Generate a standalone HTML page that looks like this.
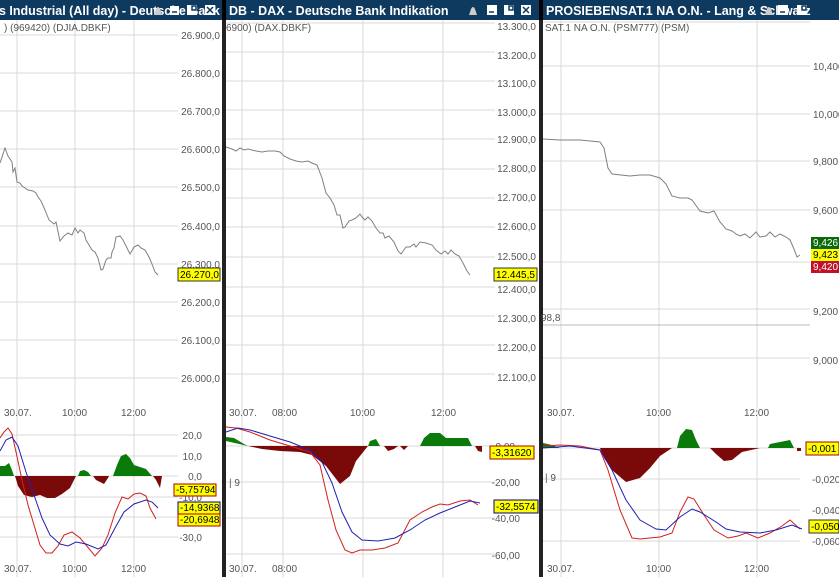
<!DOCTYPE html>
<html><head><meta charset="utf-8"><style>
body{margin:0;width:839px;height:577px;overflow:hidden;background:#fff;font-family:"Liberation Sans",sans-serif;}
svg{position:absolute;left:0;top:0}
</style></head><body>
<svg width="839" height="577" viewBox="0 0 839 577" font-family="Liberation Sans, sans-serif">
<defs>
<clipPath id="c1"><rect x="0" y="0" width="222" height="20"/></clipPath>
<clipPath id="c2"><rect x="226" y="0" width="313" height="20"/></clipPath>
<clipPath id="c3"><rect x="543" y="0" width="296" height="20"/></clipPath>
</defs>
<!-- PANEL 1 -->
<g stroke="#d8d8d8" stroke-width="1">
<line x1="17" y1="20" x2="17" y2="577"/><line x1="75" y1="20" x2="75" y2="577"/><line x1="134" y1="20" x2="134" y2="577"/>
<line x1="0" y1="35" x2="178" y2="35"/><line x1="0" y1="73" x2="178" y2="73"/><line x1="0" y1="111" x2="178" y2="111"/><line x1="0" y1="149" x2="178" y2="149"/><line x1="0" y1="187" x2="178" y2="187"/><line x1="0" y1="226" x2="178" y2="226"/><line x1="0" y1="264" x2="178" y2="264"/><line x1="0" y1="302" x2="178" y2="302"/><line x1="0" y1="340" x2="178" y2="340"/><line x1="0" y1="378" x2="178" y2="378"/>
<line x1="0" y1="435" x2="178" y2="435"/><line x1="0" y1="456" x2="178" y2="456"/><line x1="0" y1="476" x2="178" y2="476"/><line x1="0" y1="497" x2="178" y2="497"/><line x1="0" y1="517" x2="178" y2="517"/><line x1="0" y1="537" x2="178" y2="537"/>
</g>
<g font-size="10" fill="#555" text-anchor="end">
<text x="220" y="39">26.900,0</text><text x="220" y="77">26.800,0</text><text x="220" y="115">26.700,0</text><text x="220" y="153">26.600,0</text><text x="220" y="191">26.500,0</text><text x="220" y="230">26.400,0</text><text x="220" y="268">26.300,0</text><text x="220" y="306">26.200,0</text><text x="220" y="344">26.100,0</text><text x="220" y="382">26.000,0</text>
<text x="202" y="439">20,0</text><text x="202" y="460">10,0</text><text x="202" y="480">0,0</text><text x="202" y="501">-10,0</text><text x="202" y="541">-30,0</text>
</g>
<g font-size="10" fill="#555"><text x="4" y="31">) (969420) (DJIA.DBKF)</text>
<text x="4" y="416">30.07.</text><text x="62" y="416">10:00</text><text x="121" y="416">12:00</text>
<text x="4" y="572">30.07.</text><text x="62" y="572">10:00</text><text x="121" y="572">12:00</text></g>
<polyline fill="none" stroke="#808080" stroke-width="1" points="0,163 5,148 8,156 12,162 13,172 15,168 17,182 20,183 22,186 28,190 33,191 36,193 38,197 41,201 45,210 49,220 54,224 56,222 60,241 64,236 68,233 72,235 75,228 78,233 80,230 84,233 86,240 89,245 92,250 95,252 98,258 101,270 103,269 106,260 108,258 111,258 112,252 114,248 116,237 120,236 123,240 126,246 130,254 134,247 138,245 141,248 145,250 149,257 152,264 155,272 158,275"/>
<rect x="178" y="268" width="42" height="13" fill="#ff0" stroke="#333"/><text x="180" y="278" font-size="10" fill="#000">26.270,0</text>
<g fill="#0a7a0a"><path d="M0,476 L0,466 L5,466 L9,463 L12,470 L14,476Z"/><path d="M78,476 L80,471 L84,470 L88,472 L91,476Z"/><path d="M113,476 L117,465 L121,456 L126,454 L130,458 L134,465 L140,467 L146,469 L152,476Z"/></g>
<g fill="#7a0a0a"><path d="M15,476 L18,486 L24,495 L32,497 L40,495 L47,498 L55,498 L62,494 L70,488 L76,476Z"/><path d="M93,476 L96,480 L104,484 L108,478 L109,476Z"/><path d="M153,476 L156,480 L160,488 L162,476Z"/></g>
<polyline fill="none" stroke="#d02020" stroke-width="1" points="0,438 4,432 8,428 12,434 16,452 22,480 28,505 34,525 40,545 46,553 52,553 58,546 64,535 72,532 80,538 86,545 95,556 102,548 108,535 115,513 122,497 128,499 134,494 140,493 146,496 150,508 156,519"/>
<polyline fill="none" stroke="#2020b0" stroke-width="1" points="0,451 6,440 12,437 18,446 26,472 34,495 42,518 50,535 60,544 68,546 76,542 86,544 98,549 106,545 115,528 124,512 134,504 146,500 152,502 158,508"/>
<g font-size="10" fill="#000"><rect x="174" y="484" width="42" height="12" fill="#ff0" stroke="#a00"/><text x="176" y="493">-5,75794</text>
<rect x="178" y="502" width="42" height="12" fill="#ff0" stroke="#00008b"/><text x="180" y="511">-14,9368</text>
<rect x="178" y="514" width="42" height="12" fill="#ff0" stroke="#a00"/><text x="180" y="523">-20,6948</text></g>
<rect x="222" y="20" width="4" height="557" fill="#222"/>
<!-- PANEL 2 -->
<g stroke="#d8d8d8"><line x1="242" y1="20" x2="242" y2="577"/><line x1="283" y1="20" x2="283" y2="577"/><line x1="363" y1="20" x2="363" y2="577"/><line x1="443" y1="20" x2="443" y2="577"/>
<line x1="226" y1="23" x2="495" y2="23"/><line x1="226" y1="52" x2="495" y2="52"/><line x1="226" y1="81" x2="495" y2="81"/><line x1="226" y1="110" x2="495" y2="110"/><line x1="226" y1="139" x2="495" y2="139"/><line x1="226" y1="169" x2="495" y2="169"/><line x1="226" y1="198" x2="495" y2="198"/><line x1="226" y1="227" x2="495" y2="227"/><line x1="226" y1="257" x2="495" y2="257"/><line x1="226" y1="287" x2="495" y2="287"/><line x1="226" y1="316" x2="495" y2="316"/><line x1="226" y1="345" x2="495" y2="345"/><line x1="226" y1="374" x2="495" y2="374"/>
<line x1="226" y1="446" x2="495" y2="446"/><line x1="226" y1="482" x2="495" y2="482"/><line x1="226" y1="518" x2="495" y2="518"/><line x1="226" y1="554" x2="495" y2="554"/></g>
<g font-size="10" fill="#555" text-anchor="end">
<text x="536" y="30">13.300,0</text><text x="536" y="59">13.200,0</text><text x="536" y="87">13.100,0</text><text x="536" y="116">13.000,0</text><text x="536" y="143">12.900,0</text><text x="536" y="172">12.800,0</text><text x="536" y="201">12.700,0</text><text x="536" y="230">12.600,0</text><text x="536" y="260">12.500,0</text><text x="536" y="293">12.400,0</text><text x="536" y="322">12.300,0</text><text x="536" y="351">12.200,0</text><text x="536" y="381">12.100,0</text>
<text x="515" y="450">0,00</text><text x="520" y="486">-20,00</text><text x="520" y="522">-40,00</text><text x="520" y="559">-60,00</text></g>
<g font-size="10" fill="#555"><text x="226" y="31">6900) (DAX.DBKF)</text>
<text x="229" y="416">30.07.</text><text x="272" y="416">08:00</text><text x="350" y="416">10:00</text><text x="431" y="416">12:00</text>
<text x="229" y="572">30.07.</text><text x="272" y="572">08:00</text><text x="229" y="486">| 9</text></g>
<polyline fill="none" stroke="#808080" points="226,147 232,149 236,151 240,148 244,150 248,149 256,151 262,152 268,151 275,151 280,152 284,156 290,159 296,161 302,162 308,161 312,163 317,165 322,178 326,193 330,198 334,205 337,215 340,215 343,228 345,227 349,221 352,220 356,218 360,214 362,217 365,220 368,217 372,221 376,228 380,233 383,233 385,238 389,236 394,242 398,251 401,254 406,247 410,247 414,244 416,247 420,242 426,243 432,245 436,250 441,254 445,251 448,254 451,250 455,254 459,256 463,263 467,271 470,275"/>
<rect x="494" y="268" width="43" height="13" fill="#ff0" stroke="#333"/><text x="496" y="278" font-size="10">12.445,5</text>
<g fill="#0a7a0a"><path d="M226,441 L226,437 L234,438 L244,444 L248,446Z"/><path d="M368,446 L370,441 L376,439 L380,446Z"/><path d="M420,446 L424,438 L430,433 L440,433 L446,438 L458,438 L468,438 L472,446Z"/></g>
<g fill="#7a0a0a"><path d="M248,446 L262,449 L280,451 L300,452 L312,455 L326,466 L340,484 L350,476 L356,461 L364,451 L368,446Z"/><path d="M384,446 L388,451 L394,449 L398,446Z"/><path d="M400,446 L404,450 L408,446Z"/><path d="M475,446 L478,451 L482,452 L482,446Z"/></g>
<polyline fill="none" stroke="#d02020" points="226,427 236,428 250,432 270,440 290,446 310,452 320,465 328,500 336,530 345,550 352,553 360,550 372,550 385,548 398,543 410,520 422,512 432,507 440,504 448,505 460,501 470,500 478,505"/>
<polyline fill="none" stroke="#2020b0" points="226,432 238,428 250,430 270,436 290,442 310,450 322,462 332,483 342,512 352,532 362,540 378,541 395,538 410,530 425,520 440,513 455,507 470,501 480,503"/>
<g font-size="10"><rect x="490" y="446" width="44" height="13" fill="#ff0" stroke="#a00"/><text x="492" y="456">-3,31620</text>
<rect x="494" y="500" width="44" height="13" fill="#ff0" stroke="#00008b"/><text x="496" y="510">-32,5574</text></g>
<rect x="539" y="20" width="4" height="557" fill="#222"/>
<!-- PANEL 3 -->
<g stroke="#d8d8d8"><line x1="561" y1="20" x2="561" y2="577"/><line x1="659" y1="20" x2="659" y2="577"/><line x1="757" y1="20" x2="757" y2="577"/>
<line x1="543" y1="22" x2="810" y2="22"/><line x1="543" y1="66" x2="810" y2="66"/><line x1="543" y1="114" x2="810" y2="114"/><line x1="543" y1="161" x2="810" y2="161"/><line x1="543" y1="210" x2="810" y2="210"/><line x1="543" y1="262" x2="810" y2="262"/><line x1="543" y1="309" x2="810" y2="309"/><line x1="543" y1="358" x2="810" y2="358"/>
<line x1="543" y1="448" x2="800" y2="448"/><line x1="543" y1="479" x2="800" y2="479"/><line x1="543" y1="510" x2="800" y2="510"/><line x1="543" y1="541" x2="800" y2="541"/></g>
<line x1="543" y1="325" x2="810" y2="325" stroke="#bbb"/>
<g font-size="10" fill="#555"><text x="545" y="31">SAT.1 NA O.N. (PSM777) (PSM)</text>
<text x="813" y="70">10,400</text><text x="813" y="118">10,000</text><text x="813" y="165">9,800</text><text x="813" y="214">9,600</text><text x="813" y="315">9,200</text><text x="813" y="364">9,000</text>
<text x="541" y="321">98,8</text>
<text x="547" y="416">30.07.</text><text x="646" y="416">10:00</text><text x="744" y="416">12:00</text>
<text x="547" y="572">30.07.</text><text x="646" y="572">10:00</text><text x="744" y="572">12:00</text><text x="545" y="481">| 9</text>
<text x="812" y="483">-0,020</text><text x="812" y="514">-0,040</text><text x="812" y="545">-0,060</text></g>
<polyline fill="none" stroke="#808080" points="543,139 560,140 580,140 600,142 604,148 608,168 612,174 630,176 640,175 650,175 660,178 666,184 672,196 680,198 688,198 692,200 700,211 708,213 714,211 720,222 726,229 732,231 736,234 740,236 745,234 750,238 756,232 760,237 766,236 770,232 775,237 780,234 786,237 790,240 794,249 797,257 800,255"/>
<g font-size="10" fill="#fff"><rect x="811" y="237" width="28" height="12" fill="#0a6a0a"/><text x="813" y="246">9,426</text>
<rect x="811" y="249" width="28" height="12" fill="#ff0"/><text x="813" y="258" fill="#000">9,423</text>
<rect x="811" y="261" width="28" height="12" fill="#c0102a"/><text x="813" y="270">9,420</text></g>
<g fill="#0a7a0a"><path d="M543,448 L543,443 L552,445 L560,448Z"/><path d="M677,448 L680,436 L686,429 L692,430 L696,440 L700,448Z"/><path d="M768,448 L770,444 L780,442 L790,440 L794,448Z"/></g>
<g fill="#7a0a0a"><path d="M600,448 L604,458 L612,470 L626,482 L640,478 L650,468 L660,456 L672,448Z"/><path d="M710,448 L716,454 L724,461 L732,460 L742,452 L760,448Z"/><path d="M797,448 L797,451 L801,451 L801,448Z"/></g>
<polyline fill="none" stroke="#d02020" points="543,446 560,445 580,446 600,450 608,470 620,510 632,538 640,539 660,537 672,533 680,512 688,497 694,499 704,515 714,530 728,538 738,536 746,533 758,538 770,533 782,526 790,520 800,529"/>
<polyline fill="none" stroke="#2020b0" points="543,448 570,446 600,450 612,470 626,500 640,520 656,529 666,530 680,517 692,509 700,512 716,522 726,529 740,532 760,533 776,530 792,525 802,529"/>
<rect x="806" y="442" width="33" height="13" fill="#ff0" stroke="#a00"/><text x="808" y="452" font-size="10">-0,001</text>
<rect x="809" y="520" width="30" height="13" fill="#ff0" stroke="#333"/><text x="811" y="530" font-size="10">-0,050</text>
<!-- title bars -->
<rect x="0" y="0" width="839" height="20" fill="#0f3a60"/>
<rect x="222" y="0" width="4" height="20" fill="#000"/><rect x="539" y="0" width="4" height="20" fill="#000"/>
<g font-size="12.5" font-weight="bold" fill="#fff">
<text x="-1" y="15" clip-path="url(#c1)">s Industrial (All day) - Deutsche Bank</text>
<text x="229" y="15" clip-path="url(#c2)">DB - DAX - Deutsche Bank Indikation</text>
<text x="546" y="15" clip-path="url(#c3)">PROSIEBENSAT.1 NA O.N. - Lang &amp; Schwarz</text></g>
<!-- icons -->
<g fill="#ccc">
<path d="M154,15 L156,9 Q158,5 160,9 L162,15Z"/>
<path d="M469,15 L471,9 Q473,5 475,9 L477,15Z"/>
<path d="M765,15 L767,9 Q769,5 771,9 L773,15Z"/></g>
<g fill="#fff">
<rect x="170" y="6" width="9" height="9"/><rect x="187" y="5" width="10" height="10"/><rect x="205" y="5" width="10" height="10"/>
<rect x="487" y="5" width="10" height="10"/><rect x="504" y="5" width="10" height="10"/><rect x="521" y="5" width="10" height="10"/>
<rect x="778" y="5" width="10" height="10"/><rect x="797" y="5" width="10" height="10"/></g>
<g stroke="#0f3a60" stroke-width="1.5" fill="none">
<line x1="172" y1="12" x2="177" y2="12"/><rect x="192" y="6" width="4" height="4"/><path d="M207,7 L213,13 M213,7 L207,13"/>
<line x1="489" y1="12" x2="494" y2="12"/><rect x="509" y="6" width="4" height="4"/><path d="M523,7 L529,13 M529,7 L523,13"/>
<line x1="780" y1="12" x2="785" y2="12"/><rect x="802" y="6" width="4" height="4"/></g>
</svg>
</body></html>
